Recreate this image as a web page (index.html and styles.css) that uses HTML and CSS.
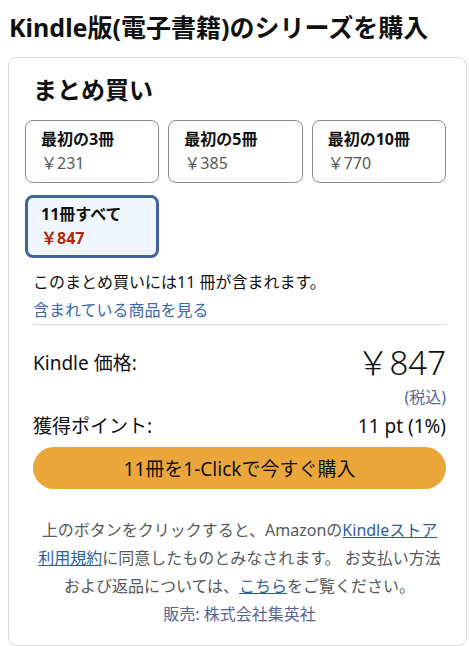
FILE: index.html
```html
<!DOCTYPE html>
<html lang="ja">
<head>
  <meta charset="UTF-8" />
  <meta name="viewport" content="width=device-width, initial-scale=1.0"/>
  <title>Kindle版(電子書籍)のシリーズを購入</title>
  <link rel="stylesheet" href="styles.css">
</head>
<body>
  <h1 class="page-title">Kindle版(電子書籍)のシリーズを購入</h1>

  <div class="card">
    <h2 class="card-title">まとめ買い</h2>

    <div class="options">
      <div class="option">
        <div class="option-name">最初の3冊</div>
        <div class="option-price">￥231</div>
      </div>
      <div class="option">
        <div class="option-name">最初の5冊</div>
        <div class="option-price">￥385</div>
      </div>
      <div class="option">
        <div class="option-name">最初の10冊</div>
        <div class="option-price">￥770</div>
      </div>
      <div class="option selected">
        <div class="option-name">11冊すべて</div>
        <div class="option-price">￥847</div>
      </div>
    </div>

    <div class="section">
      <p class="included">このまとめ買いには11 冊が含まれます。</p>
      <a class="link" href="#">含まれている商品を見る</a>
    </div>

    <div class="section summary">
      <div class="row price-row">
        <span class="label">Kindle 価格:</span>
        <span class="big-price">￥847</span>
      </div>
      <div class="tax">(税込)</div>
      <div class="row points-row">
        <span class="label">獲得ポイント:</span>
        <span class="label">11 pt (1%)</span>
      </div>
      <button type="button" class="buy-btn">11冊を1-Clickで今すぐ購入</button>

      <p class="terms">上のボタンをクリックすると、Amazonの<a href="#">Kindleストア<br>利用規約</a>に同意したものとみなされます。 お支払い方法<br>および返品については、<a href="#">こちら</a>をご覧ください。</p>
      <p class="seller">販売: 株式会社集英社</p>
    </div>
  </div>
</body>
</html>
```

FILE: styles.css
```css
* { box-sizing: border-box; }

body {
  font-family: "Noto Sans", "Noto Sans CJK JP", sans-serif;
  color: #0f1111;
  background-color: #fff;
  margin: 0;
  padding: 0 2px 0 8px;
}

.page-title {
  font-size: 25px;
  line-height: 34px;
  font-weight: bold;
  margin: 10px 0 13px 1px;
}

.card {
  border: 1px solid #d5d9d9;
  border-radius: 9px;
  padding: 16px 20px 17px 16px;
}

.card-title {
  font-size: 24px;
  line-height: 32px;
  font-weight: bold;
  margin: 0 0 14px 8px;
}

.options {
  display: grid;
  grid-template-columns: repeat(3, 1fr);
  column-gap: 9px;
  row-gap: 12px;
}

.option {
  border: 1px solid #888c8c;
  border-radius: 8px;
  padding: 6px 15px 7px;
  background-color: #fff;
}

.option-name {
  font-size: 16px;
  line-height: 24px;
  font-weight: bold;
}

.option-price {
  font-size: 16px;
  line-height: 24px;
  color: #565959;
}

.option.selected {
  border: 3px solid #41649c;
  background-color: #eff6fe;
  padding: 4px 13px 5px;
}

.option.selected .option-price {
  color: #b12704;
  font-weight: bold;
}

.section {
  margin-left: 8px;
}

.included {
  margin: 10px 0 0;
  font-size: 16px;
  line-height: 28px;
}

.link {
  display: block;
  font-size: 16px;
  line-height: 28px;
  color: #3c68a6;
  text-decoration: none;
  border-bottom: 1px solid #d5d9d9;
}

.row {
  display: flex;
  justify-content: space-between;
  align-items: center;
}

.label {
  font-size: 19px;
}

.price-row {
  margin-top: 18px;
  line-height: 40px;
}

.big-price {
  font-size: 33px;
  font-weight: 300;
}

.tax {
  text-align: right;
  font-size: 16px;
  line-height: 22px;
  margin-top: 3px;
  color: #55649a;
}

.points-row {
  margin-top: 5px;
  line-height: 26px;
}

.buy-btn {
  display: block;
  width: 100%;
  height: 42px;
  margin-top: 8px;
  border: none;
  border-radius: 21px;
  background-color: #eba63b;
  color: #0f1111;
  font-family: inherit;
  font-size: 19px;
  cursor: pointer;
}

.terms {
  margin: 27px 0 0;
  text-align: center;
  font-size: 16px;
  line-height: 28px;
  color: #565959;
}

.terms a {
  color: #2f5d9e;
  text-decoration: underline;
}

.seller {
  margin: 0;
  text-align: center;
  font-size: 16px;
  line-height: 28px;
  color: #55649a;
}
```
